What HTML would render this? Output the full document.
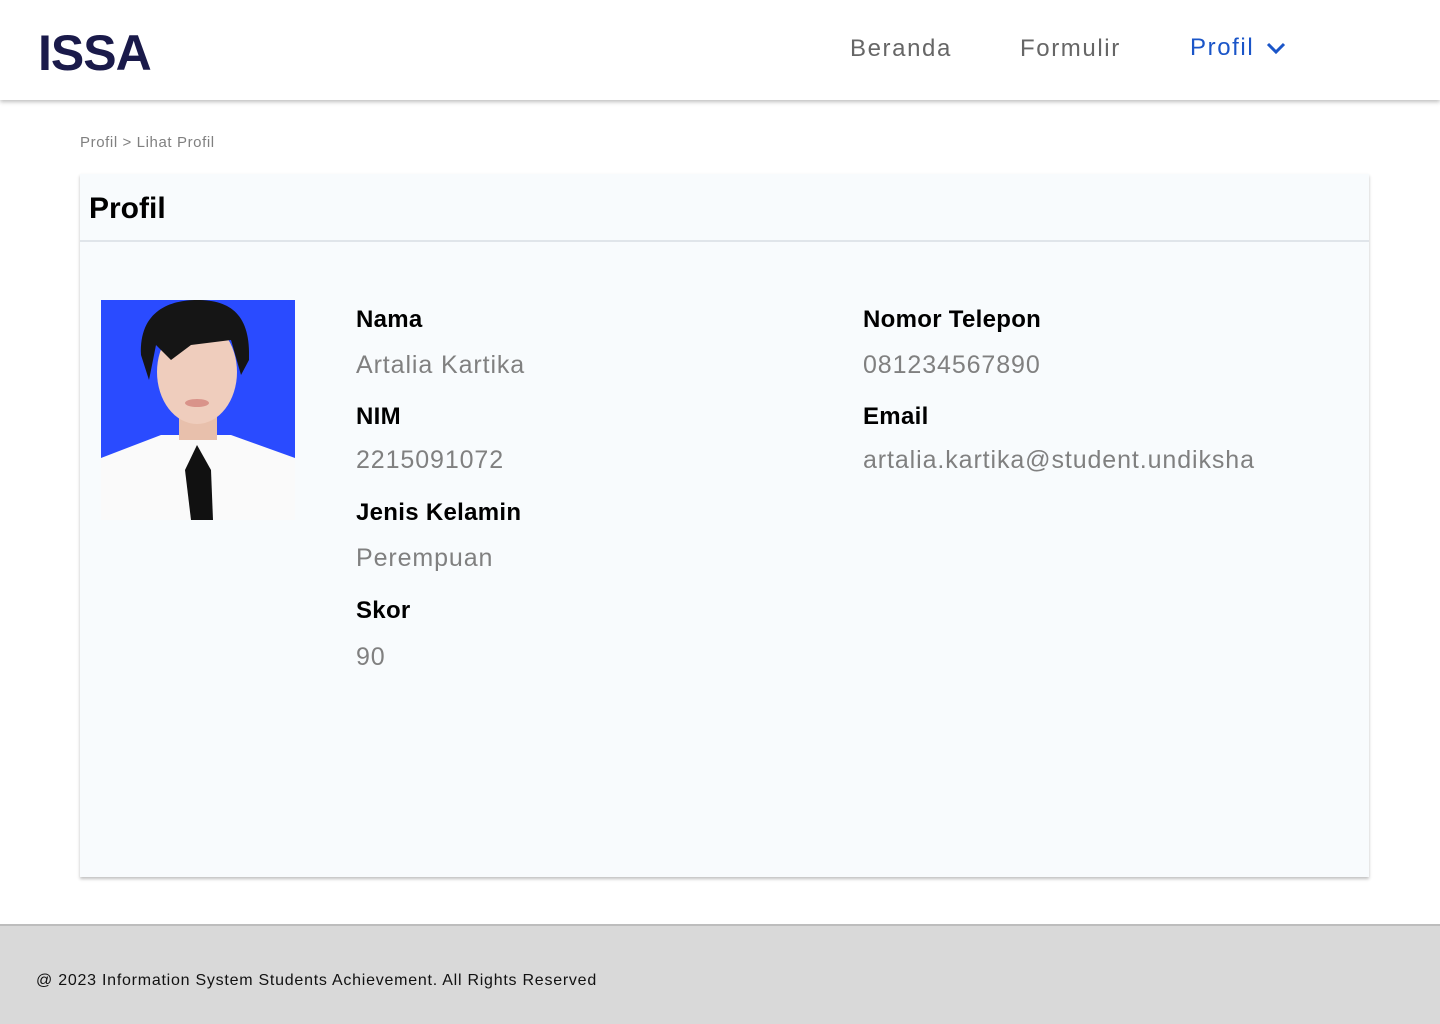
<!DOCTYPE html>
<html><head><meta charset="utf-8"><style>
*{margin:0;padding:0;box-sizing:border-box}
body{width:1440px;height:1024px;background:#fff;font-family:"Liberation Sans",sans-serif;position:relative;overflow:hidden}
.hdr{position:absolute;left:0;top:0;width:1440px;height:100px;background:#fff;box-shadow:0 2px 4px rgba(0,0,0,.25)}
.logo{position:absolute;left:38px;top:24px;font-size:50px;font-weight:bold;color:#1a1a4a;letter-spacing:-1px}
.nav{position:absolute;top:35px;font-size:24px;color:#666;letter-spacing:1.6px}
.crumb{position:absolute;left:80px;top:134px;font-size:15px;color:#808080;letter-spacing:.6px}
.card{position:absolute;left:80px;top:174px;width:1289px;height:703px;background:#f8fbfd;box-shadow:0 2px 3px rgba(0,0,0,.25)}
.card h1{position:absolute;left:9px;top:18px;font-size:30px;color:#000}
.line{position:absolute;left:0;top:66px;width:100%;height:2px;background:#e0e5ea}
.l{position:absolute;font-size:24px;font-weight:bold;color:#000;letter-spacing:.3px}
.v{position:absolute;font-size:25px;color:#808080;letter-spacing:.9px}
.foot{position:absolute;left:0;top:924px;width:1440px;height:100px;background:#d9d9d9;border-top:2px solid #bdbdbd}
.foot span{position:absolute;left:36px;top:46px;font-size:16px;color:#111;letter-spacing:.75px}
</style></head><body>
<div class="hdr">
<div class="logo">ISSA</div>
<div class="nav" style="left:850px">Beranda</div>
<div class="nav" style="left:1020px">Formulir</div>
<div class="nav" style="left:1190px;top:34px;color:#1a55c8">Profil</div>
<svg style="position:absolute;left:1265px;top:40px" width="22" height="16" viewBox="0 0 22 16"><path d="M3 4l8 8 8-8" fill="none" stroke="#1a55c8" stroke-width="3"/></svg>
</div>
<div class="crumb">Profil &gt; Lihat Profil</div>
<div class="card">
<h1>Profil</h1><div class="line"></div>
<svg style="position:absolute;left:21px;top:126px" width="194" height="220" viewBox="0 0 194 220">
<rect width="194" height="220" fill="#2a4bff"/>
<path d="M0 158 L60 135 L130 135 L194 158 L194 220 L0 220Z" fill="#fafafa"/>
<rect x="78" y="95" width="38" height="45" fill="#e8c0ac"/>
<ellipse cx="96" cy="72" rx="40" ry="52" fill="#efcdbd"/>
<path d="M40 55 C38 10 70 0 96 0 C130 0 150 15 148 60 L140 75 L130 40 L90 45 L70 60 L55 45 L48 80Z" fill="#151515"/>
<path d="M96 145 L84 170 L90 220 L112 220 L110 170Z" fill="#111"/>
<ellipse cx="96" cy="103" rx="12" ry="4" fill="#d9938a"/>
</svg>
<div class="l" style="left:276px;top:132px">Nama</div>
<div class="v" style="left:276px;top:177px">Artalia Kartika</div>
<div class="l" style="left:276px;top:229px">NIM</div>
<div class="v" style="left:276px;top:272px">2215091072</div>
<div class="l" style="left:276px;top:325px">Jenis Kelamin</div>
<div class="v" style="left:276px;top:370px">Perempuan</div>
<div class="l" style="left:276px;top:423px">Skor</div>
<div class="v" style="left:276px;top:469px">90</div>
<div class="l" style="left:783px;top:132px">Nomor Telepon</div>
<div class="v" style="left:783px;top:177px">081234567890</div>
<div class="l" style="left:783px;top:229px">Email</div>
<div class="v" style="left:783px;top:272px">artalia.kartika@student.undiksha</div>
</div>
<div class="foot"><span>@ 2023 Information System Students Achievement. All Rights Reserved</span></div>
</body></html>
